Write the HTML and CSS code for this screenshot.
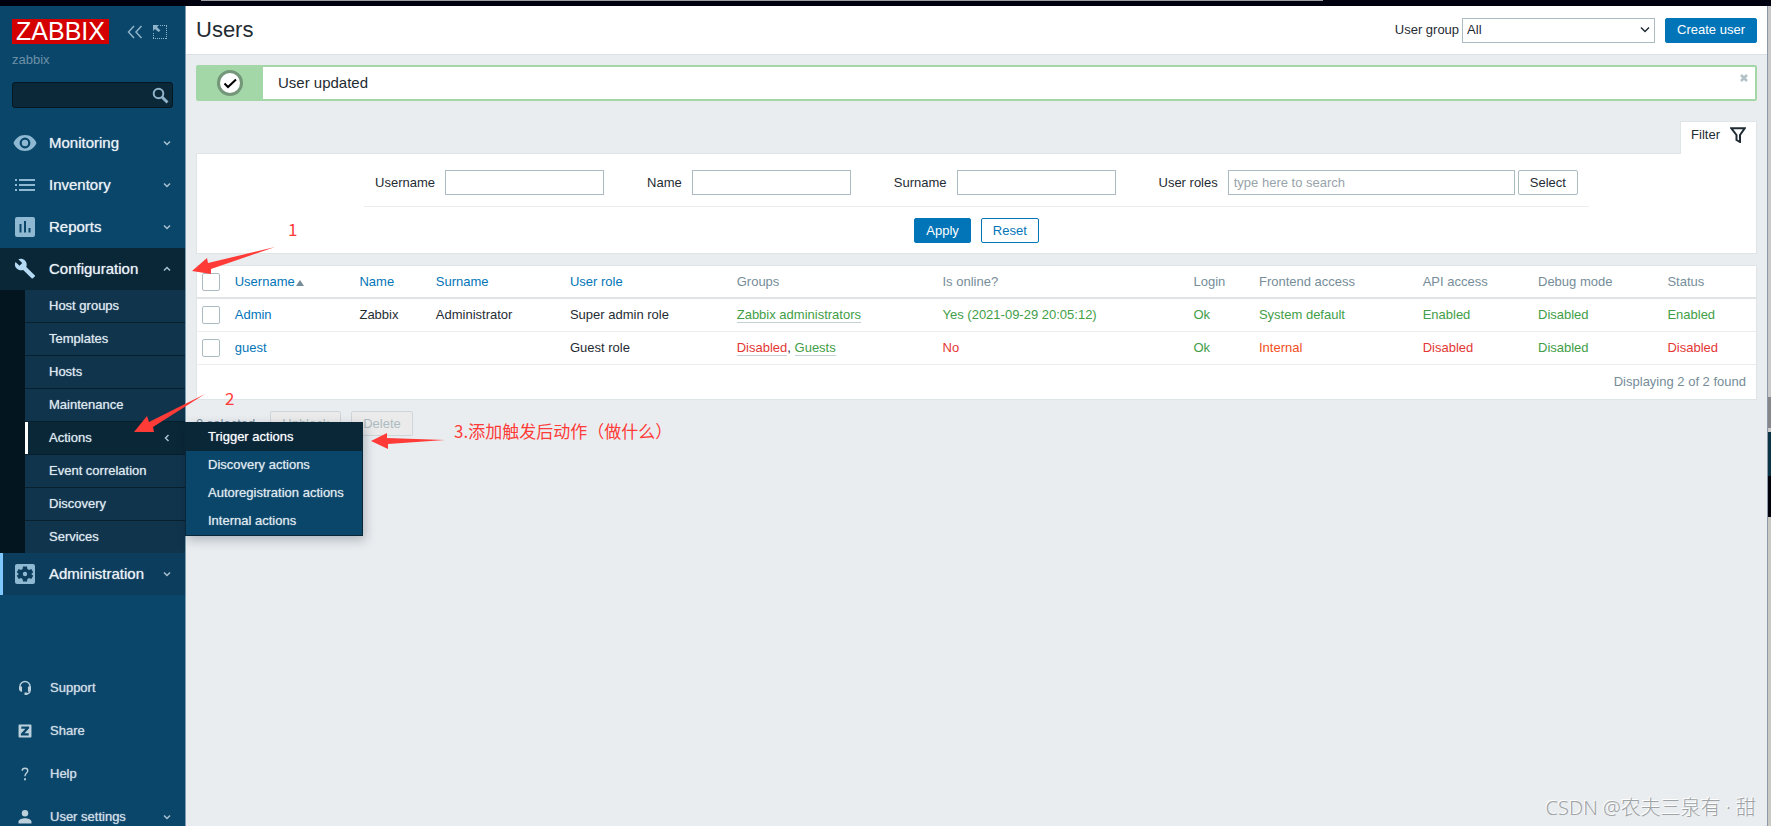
FILE: index.html
```html
<!DOCTYPE html>
<html lang="en">
<head>
  <meta charset="UTF-8">
  <meta name="viewport" content="width=device-width, initial-scale=1.0">
  <title>Users</title>
  <link rel="stylesheet" href="styles.css">
</head>
<body>
  <div class="top-strip"></div>
  <div class="layout">
    <aside class="sidebar">
      <div class="brand">
        <a href="#" class="logo">ZABBIX</a>
        <button class="icon-btn" aria-label="Collapse sidebar">
          <svg width="16" height="14" viewBox="0 0 16 14"><path d="M7 1L1.500 7L7 13M14.500 1L9 7L14.500 13"/></svg>
        </button>
        <button class="icon-btn" aria-label="Hide sidebar">
          <svg width="14" height="14" viewBox="0 0 14 14"><path d="M7 .500H14M13.500 1V14M13 13.500H0M.500 13V7" class="dots"/><path d="M0 0H6L4 2L7.500 5.500L5.500 7L2 4L0 6Z" class="fill"/></svg>
        </button>
      </div>
      <div class="server-name">zabbix</div>
      <form class="search">
        <input type="text" aria-label="Search">
        <button type="button" class="icon-btn" aria-label="Search">
          <svg width="18" height="18" viewBox="0 0 18 18"><circle cx="7.500" cy="7.500" r="4.800" class="ring"/><path d="M11 11L16.500 16.500" class="thick"/></svg>
        </button>
      </form>
      <nav>
        <ul class="menu">
          <li>
            <a href="#" class="menu-link">
              <svg class="menu-icon" viewBox="0 0 24 24"><path d="M12 4C6.500 4 2.500 7.500.500 12c2 4.500 6 8 11.500 8s9.500-3.500 11.500-8C21.500 7.500 17.500 4 12 4zm0 13.400a5.400 5.400 0 1 1 0-10.800 5.400 5.400 0 0 1 0 10.800zm0-8.600a3.200 3.200 0 1 0 0 6.400 3.200 3.200 0 0 0 0-6.400z"/></svg>
              <span>Monitoring</span>
              <svg class="arrow" viewBox="0 0 8 8"><path d="M1 2.500L4 5.500L7 2.500"/></svg>
            </a>
          </li>
          <li>
            <a href="#" class="menu-link">
              <svg class="menu-icon" viewBox="0 0 24 24"><path d="M2 6h2v2H2zM2 11h2v2H2zM2 16h2v2H2zM6 6h16v2H6zM6 11h16v2H6zM6 16h16v2H6z"/></svg>
              <span>Inventory</span>
              <svg class="arrow" viewBox="0 0 8 8"><path d="M1 2.500L4 5.500L7 2.500"/></svg>
            </a>
          </li>
          <li>
            <a href="#" class="menu-link">
              <svg class="menu-icon" viewBox="0 0 24 24"><path fill-rule="evenodd" d="M4 2h16a2 2 0 0 1 2 2v16a2 2 0 0 1-2 2H4a2 2 0 0 1-2-2V4a2 2 0 0 1 2-2zM6.500 9v8.500h2V9zM11 6v11.500h2V6zM15.500 13v4.500h2V13z"/></svg>
              <span>Reports</span>
              <svg class="arrow" viewBox="0 0 8 8"><path d="M1 2.500L4 5.500L7 2.500"/></svg>
            </a>
          </li>
          <li class="open">
            <a href="#" class="menu-link">
              <svg class="menu-icon" viewBox="0 0 24 24"><path d="M21.700 18.300l-8.400-8.400c.9-2.200.4-4.700-1.300-6.500C10.200 1.600 7.500 1.200 5.300 2.200l3.900 3.900-2.700 2.700-4-3.900C1.300 7.100 1.900 9.800 3.700 11.600c1.800 1.800 4.300 2.200 6.500 1.300l8.400 8.400c.4.400.9.400 1.300 0l1.900-1.900c.4-.3.4-.9-.1-1.100z"/></svg>
              <span>Configuration</span>
              <svg class="arrow" viewBox="0 0 8 8"><path d="M1 5.500L4 2.500L7 5.500"/></svg>
            </a>
            <ul class="submenu">
              <li><a href="#">Host groups</a></li>
              <li><a href="#">Templates</a></li>
              <li><a href="#">Hosts</a></li>
              <li><a href="#">Maintenance</a></li>
              <li class="selected">
                <a href="#">Actions
                  <svg class="arrow" viewBox="0 0 8 8"><path d="M5.500 1L2.500 4L5.500 7"/></svg>
                </a>
                <ul class="flyout">
                  <li><a href="#" class="current">Trigger actions</a></li>
                  <li><a href="#">Discovery actions</a></li>
                  <li><a href="#">Autoregistration actions</a></li>
                  <li><a href="#">Internal actions</a></li>
                </ul>
              </li>
              <li><a href="#">Event correlation</a></li>
              <li><a href="#">Discovery</a></li>
              <li><a href="#">Services</a></li>
            </ul>
          </li>
          <li class="active">
            <a href="#" class="menu-link">
              <svg class="menu-icon" viewBox="0 0 24 24"><path fill-rule="evenodd" d="M4 2h16a2 2 0 0 1 2 2v16a2 2 0 0 1-2 2H4a2 2 0 0 1-2-2V4a2 2 0 0 1 2-2zM10 4.500L9.600 7 8 7.900 5.700 7 3.800 10.300 5.800 12 3.800 13.700 5.700 17 8 16.100 9.600 17 10 19.500h4l.4-2.500 1.600-.9 2.300.9 1.900-3.300L18.200 12l2-1.700L18.300 7 16 7.900 14.400 7 14 4.500zM12 9.800a2.200 2.200 0 1 1 0 4.400 2.200 2.200 0 0 1 0-4.400z"/></svg>
              <span>Administration</span>
              <svg class="arrow" viewBox="0 0 8 8"><path d="M1 2.500L4 5.500L7 2.500"/></svg>
            </a>
          </li>
        </ul>
        <ul class="menu user-menu">
          <li>
            <a href="#" class="menu-link">
              <svg class="menu-icon" viewBox="-1 -1 26 26"><path d="M6.500 14.500V10.500a5.500 5.500 0 0 1 11 0v4.500c0 2-1 3-4 3.500" class="line"/><path d="M5.500 10.500h3.300V16H7.500L5.500 14zM15.200 10.500h3.300V14l-2 2h-1.300zM11.500 17h3v2.500h-3z"/></svg>
              <span>Support</span>
            </a>
          </li>
          <li>
            <a href="#" class="menu-link">
              <svg class="menu-icon" viewBox="-1 -1 26 26"><path fill-rule="evenodd" d="M6 5h12a1 1 0 0 1 1 1v12a1 1 0 0 1-1 1H6a1 1 0 0 1-1-1V6a1 1 0 0 1 1-1zM8 7v2.500h4.500L7.500 15v2H16v-2.500h-4.500L16.500 9V7z"/></svg>
              <span>Share</span>
            </a>
          </li>
          <li>
            <a href="#" class="menu-link">
              <svg class="menu-icon" viewBox="-1 -1 26 26"><path d="M9 8.500C9 6.500 10.300 5.700 12 5.700s3 .9 3 2.800c0 2.500-3 2.600-3 6" class="line"/><path d="M11 16.500h2v2.200h-2z"/></svg>
              <span>Help</span>
            </a>
          </li>
          <li>
            <a href="#" class="menu-link">
              <svg class="menu-icon" viewBox="-1 -1 26 26"><circle cx="12" cy="8" r="3.500"/><path d="M5 19v-2c0-2.500 4.500-3.700 7-3.700s7 1.200 7 3.700v2z"/></svg>
              <span>User settings</span>
              <svg class="arrow" viewBox="0 0 8 8"><path d="M1 2.500L4 5.500L7 2.500"/></svg>
            </a>
          </li>
        </ul>
      </nav>
    </aside>

    <div class="wrapper">
      <header class="header">
        <h1>Users</h1>
        <label for="userGroup">User group</label>
        <div class="select-wrap">
          <select id="userGroup"><option>All</option></select>
          <svg width="10" height="8" viewBox="0 0 10 8"><path d="M1 1.500L5 5.500L9 1.500"/></svg>
        </div>
        <button class="btn primary">Create user</button>
      </header>

      <main>
        <div class="message">
          <div class="message-icon">
            <svg width="28" height="28" viewBox="0 0 28 28"><circle cx="14" cy="14" r="11.500"/><path d="M8.500 14.500L12 18L20 10.500"/></svg>
          </div>
          <span>User updated</span>
          <button class="close" aria-label="Close">
            <svg width="8" height="8" viewBox="0 0 8 8"><path d="M1 1L7 7M7 1L1 7"/></svg>
          </button>
        </div>

        <div class="filter-tabs">
          <a href="#" class="filter-tab">Filter
            <svg width="16" height="16" viewBox="0 0 16 16"><path d="M1.200 1.200H14.800L10 8V15L6.500 13V8Z"/></svg>
          </a>
        </div>
        <form class="filter">
          <div class="filter-fields">
            <div class="field"><label for="username">Username</label><input type="text" id="username"></div>
            <div class="field"><label for="name">Name</label><input type="text" id="name"></div>
            <div class="field"><label for="surname">Surname</label><input type="text" id="surname"></div>
            <div class="field">
              <label for="roles">User roles</label>
              <div class="multiselect">
                <input type="text" id="roles" placeholder="type here to search">
                <button type="button" class="btn grey">Select</button>
              </div>
            </div>
          </div>
          <div class="filter-buttons">
            <button type="button" class="btn primary">Apply</button>
            <button type="button" class="btn">Reset</button>
          </div>
        </form>

        <table class="list">
          <colgroup>
            <col class="c-check"><col class="c-username"><col class="c-name"><col class="c-surname">
            <col class="c-role"><col class="c-groups"><col class="c-online"><col class="c-login">
            <col class="c-frontend"><col class="c-api"><col class="c-debug"><col class="c-status">
          </colgroup>
          <thead>
            <tr>
              <th><input type="checkbox" aria-label="Select all"></th>
              <th><a href="#">Username <span class="sort-arrow"></span></a></th>
              <th><a href="#">Name</a></th>
              <th><a href="#">Surname</a></th>
              <th><a href="#">User role</a></th>
              <th>Groups</th>
              <th>Is online?</th>
              <th>Login</th>
              <th>Frontend access</th>
              <th>API access</th>
              <th>Debug mode</th>
              <th>Status</th>
            </tr>
          </thead>
          <tbody>
            <tr>
              <td><input type="checkbox" aria-label="Select Admin"></td>
              <td><a href="#">Admin</a></td>
              <td>Zabbix</td>
              <td>Administrator</td>
              <td>Super admin role</td>
              <td><a href="#" class="dotted green">Zabbix administrators</a></td>
              <td class="green">Yes (2021-09-29 20:05:12)</td>
              <td class="green">Ok</td>
              <td class="green">System default</td>
              <td class="green">Enabled</td>
              <td class="green">Disabled</td>
              <td><a href="#" class="green">Enabled</a></td>
            </tr>
            <tr>
              <td><input type="checkbox" aria-label="Select guest"></td>
              <td><a href="#">guest</a></td>
              <td></td>
              <td></td>
              <td>Guest role</td>
              <td><a href="#" class="dotted red">Disabled</a>, <a href="#" class="dotted green">Guests</a></td>
              <td class="red">No</td>
              <td class="green">Ok</td>
              <td class="orange">Internal</td>
              <td class="red">Disabled</td>
              <td class="green">Disabled</td>
              <td><a href="#" class="red">Disabled</a></td>
            </tr>
          </tbody>
          <tfoot>
            <tr><td colspan="12">Displaying 2 of 2 found</td></tr>
          </tfoot>
        </table>

        <div class="actions">
          <span>0 selected</span>
          <button class="btn" disabled>Unblock</button>
          <button class="btn" disabled>Delete</button>
        </div>
      </main>
    </div>
    <div class="right-strip"></div>
  </div>

  <!-- Tutorial notes drawn over the page -->
  <svg class="notes" width="450" height="460" viewBox="0 0 450 460">
    <path d="M192 271L207 258L208 263L275 247L211 269L211 274Z"/>
    <path d="M134 432L147 416L149 422L205 394L153 427L154 432Z"/>
    <path d="M371 441L387 433L387 438L445 440L388 444L388 449Z"/>
  </svg>
  <span class="note note-1">1</span>
  <span class="note note-2">2</span>
  <span class="note note-3">3.添加触发后动作（做什么）</span>
  <span class="watermark">CSDN @农夫三泉有 · 甜</span>
</body>
</html>
```
FILE: styles.css
```css
* {
  box-sizing: border-box;
}

body {
  display: flex;
  flex-direction: column;
  position: relative;
  height: 100vh;
  margin: 0;
  overflow: hidden;
  font-family: "Liberation Sans", Arial, sans-serif;
  font-size: 13px;
  line-height: 16px;
  color: #1f2c33;
  background-color: #e9edf0;
}

ul {
  margin: 0;
  padding: 0;
  list-style: none;
}

a {
  color: #0275b8;
  text-decoration: none;
}

svg {
  display: block;
  fill: none;
  stroke: currentColor;
}

button,
input,
select {
  font: inherit;
  color: inherit;
}

.top-strip {
  flex: none;
  height: 6px;
  background: linear-gradient(90deg, #00010f 201px, #9a9da2 201px, #9a9da2 1323px, #00010f 1323px) 0 0 / 100% 1px no-repeat #00010f;
}

.layout {
  display: flex;
  flex: 1;
  min-height: 0;
}

/* Sidebar */
.sidebar {
  flex: none;
  width: 186px;
  background-color: #0a466a;
  border-right: 1px solid #7c9db1;
}

.brand {
  display: flex;
  align-items: center;
  gap: 10px;
  padding: 13px 12px 0;
}

.logo {
  width: 97px;
  margin-right: 8px;
  color: #fff;
  background-color: #d40000;
  font-size: 25px;
  line-height: 25px;
  text-align: center;
}

.icon-btn {
  padding: 0;
  border: 0;
  background: none;
  color: #8fb3ca;
}

.icon-btn svg {
  stroke-width: 1.5;
}

.icon-btn .fill {
  fill: currentColor;
  stroke: none;
}

.icon-btn .dots {
  stroke-width: 1;
  stroke-dasharray: 1 1;
}

.icon-btn .ring {
  stroke-width: 2;
}

.icon-btn .thick {
  stroke-width: 3;
}

.server-name {
  padding: 8px 12px 0;
  color: #6d91a8;
}

.search {
  display: flex;
  align-items: center;
  height: 26px;
  margin: 14px 12px;
  padding-right: 3px;
  background-color: #0a2838;
  border: 1px solid #041722;
  border-radius: 3px;
}

.search input {
  flex: 1;
  min-width: 0;
  border: 0;
  background: none;
  color: #fff;
}

.menu-link {
  display: flex;
  align-items: center;
  height: 42px;
  padding: 0 14px 0 13px;
  color: #eaf2f6;
  font-size: 15px;
  text-shadow: 0 0 1px #b7cad6;
}

.menu-link span {
  flex: 1;
}

.menu-icon {
  width: 24px;
  height: 24px;
  margin-right: 12px;
  fill: #8fb8d2;
  stroke: none;
}

.menu-icon .line {
  fill: none;
  stroke: #bcd0dc;
  stroke-width: 1.5;
}

.arrow {
  width: 8px;
  height: 8px;
  color: #a9c1cf;
  stroke-width: 1.5;
}

.open > .menu-link {
  background-color: #0a2737;
}

.open > .menu-link .menu-icon {
  fill: #b5daf3;
}

.active > .menu-link {
  padding-left: 10px;
  border-left: 3px solid #7ec8ff;
  background-color: #0c3d5c;
}

.submenu {
  padding-left: 25px;
  background-color: #03151f;
}

.submenu > li {
  position: relative;
  background-color: #11344d;
}

.submenu > li + li {
  border-top: 1px solid #081f2e;
}

.submenu a {
  display: flex;
  align-items: center;
  justify-content: space-between;
  height: 32px;
  padding: 0 14px 0 24px;
  color: #dfe9ef;
  text-shadow: 0 0 1px #a5bac6;
}

.submenu > .selected {
  background-color: #0a2737;
}

.selected > a {
  padding-left: 21px;
  border-left: 3px solid #fff;
}

.flyout {
  position: absolute;
  top: 0;
  left: 100%;
  z-index: 2;
  width: 178px;
  background-color: #0a466a;
  border: 1px solid #0a2737;
  box-shadow: 2px 4px 10px rgba(0, 20, 40, 0.25);
}

.submenu .flyout a {
  height: 28px;
  padding: 0 22px;
  white-space: nowrap;
}

.submenu .flyout .current {
  background-color: #0a2737;
  color: #fff;
}

.user-menu {
  margin-top: 71px;
}

.user-menu .menu-link {
  height: 43px;
  color: #cfdde5;
  font-size: 13px;
}

.user-menu .menu-icon {
  margin-right: 13px;
  fill: #bcd0dc;
}

/* Page header */
.wrapper {
  flex: 1;
  min-width: 0;
}

.header {
  display: flex;
  align-items: center;
  height: 49px;
  padding: 0 10px;
  background-color: #fff;
  border-bottom: 1px solid #dbe1e5;
}

.header h1 {
  flex: 1;
  margin: 0;
  font-size: 22px;
  line-height: 24px;
  font-weight: normal;
}

.select-wrap {
  display: flex;
  align-items: center;
  width: 193px;
  height: 25px;
  margin: 0 10px 0 3px;
  padding-right: 4px;
  border: 1px solid #acbbc2;
}

.select-wrap select {
  flex: 1;
  padding: 0 4px;
  border: 0;
  background: none;
  appearance: none;
}

.select-wrap svg {
  stroke-width: 1.5;
}

.btn {
  height: 25px;
  padding: 0 11px;
  background-color: #fff;
  border: 1px solid #0275b8;
  border-radius: 2px;
  color: #0275b8;
}

.btn.primary {
  background-color: #0275b8;
  color: #fff;
}

.btn.grey {
  border-color: #acbbc2;
  color: #1f2c33;
}

.btn:disabled {
  background-color: #ebebeb;
  border-color: #cfd6da;
  color: #acbbc2;
}

main {
  padding: 10px 10px 0;
}

.message {
  display: flex;
  align-items: center;
  height: 36px;
  background-color: #fff;
  border: 2px solid #a3d7a8;
  border-radius: 2px;
  font-size: 15px;
}

.message span {
  flex: 1;
}

.message-icon {
  display: flex;
  align-items: center;
  justify-content: center;
  align-self: stretch;
  width: 65px;
  margin-right: 15px;
  padding-right: 2px;
  background-color: #a3d7a8;
}

.message-icon circle {
  fill: #fff;
  stroke: #749779;
  stroke-width: 3;
}

.message-icon path {
  stroke: #000;
  stroke-width: 2;
}

.close {
  align-self: flex-start;
  padding: 7px 7px;
  border: 0;
  background: none;
  color: #b4c0c7;
}

.close svg {
  stroke-width: 2.5;
}

/* Filter */
.filter-tabs {
  display: flex;
  justify-content: flex-end;
  margin-top: 20px;
}

.filter-tab {
  display: flex;
  align-items: center;
  gap: 10px;
  height: 33px;
  margin-bottom: -1px;
  padding: 0 10px 7px;
  background-color: #fff;
  border: 1px solid #dfe4e7;
  border-bottom: 0;
  color: #1f2c33;
}

.filter-tab svg {
  stroke-width: 2;
}

.filter {
  padding: 16px 20px 10px;
  background-color: #fff;
  border: 1px solid #dfe4e7;
}

.filter-fields {
  display: flex;
  justify-content: space-between;
  width: max-content;
  max-width: 100%;
  gap: 43px;
  margin: 0 auto;
  padding: 0 11px 11px;
  border-bottom: 1px solid #ebeef0;
}

.field {
  display: flex;
  align-items: center;
  gap: 10px;
}

.field input {
  width: 159px;
  height: 25px;
  padding: 0 5px;
  border: 1px solid #acbbc2;
  background-color: #fff;
}

.field input::placeholder {
  color: #98a3aa;
}

.multiselect {
  display: flex;
  gap: 3px;
}

.multiselect input {
  width: 287px;
}

.filter-buttons {
  display: flex;
  justify-content: center;
  gap: 10px;
  padding-top: 11px;
}

/* List of users */
.list {
  width: 100%;
  margin-top: 11px;
  table-layout: fixed;
  border-collapse: separate;
  border-spacing: 0;
  background-color: #fff;
  border: 1px solid #dfe4e7;
}

.c-check { width: 2.1%; }
.c-username { width: 8%; }
.c-name { width: 4.9%; }
.c-surname { width: 8.6%; }
.c-role { width: 10.7%; }
.c-groups { width: 13.2%; }
.c-online { width: 16.1%; }
.c-login { width: 4.2%; }
.c-frontend { width: 10.5%; }
.c-api { width: 7.4%; }
.c-debug { width: 8.3%; }

.list th,
.list td {
  height: 33px;
  padding: 0 5px;
  text-align: left;
  font-weight: normal;
  white-space: nowrap;
  border-bottom: 1px solid #ebeef0;
}

.list th {
  color: #768d99;
  border-bottom: 2px solid #dfe4e7;
}

.list tfoot td {
  height: 34px;
  padding-right: 10px;
  text-align: right;
  color: #768d99;
  border-bottom: 0;
}

.list input {
  display: block;
  width: 18px;
  height: 18px;
  margin: 0;
  appearance: none;
  background-color: #fff;
  border: 1px solid #acbbc2;
  border-radius: 2px;
}

.sort-arrow {
  display: inline-block;
  margin-left: -2px;
  border: 4px solid transparent;
  border-top: 0;
  border-bottom: 6px solid #768d99;
}

.green { color: #429e47; }
.red { color: #e33734; }
.orange { color: #f24f1d; }

.dotted {
  border-bottom: 1px solid #c5d0d6;
}

.actions {
  display: flex;
  align-items: center;
  gap: 10px;
  margin-top: 11px;
  color: #768d99;
}

.actions span {
  margin-right: 5px;
}

.right-strip {
  flex: none;
  width: 4px;
  border-left: 1px solid #8c97a8;
  background: linear-gradient(#c9c9c9 391px, #85878a 391px, #85878a 422px, #c9c9c9 422px, #c9c9c9 426px, #0b3444 426px, #0b3444 470px, #00010a 470px, #00010a 511px, #c9c9c4 511px);
}

/* Notes */
.notes {
  position: absolute;
  top: 0;
  left: 0;
  z-index: 3;
  fill: #ff3b38;
  stroke: none;
  pointer-events: none;
}

.note,
.watermark {
  position: absolute;
  z-index: 3;
  font-family: "Noto Sans CJK SC", sans-serif;
  white-space: nowrap;
}

.note {
  color: #ff3b38;
  font-size: 17px;
  line-height: 20px;
}

.note-1 {
  top: 219px;
  left: 288px;
}

.note-2 {
  top: 388px;
  left: 225px;
}

.note-3 {
  top: 421px;
  left: 454px;
}

.watermark {
  right: 15px;
  bottom: 6px;
  color: #a0a3a5;
  font-family: "Noto Sans", "Noto Sans CJK SC", sans-serif;
  font-size: 20px;
  font-weight: 300;
  line-height: 24px;
  text-shadow: -1px -1px 0 #fff;
}
```
